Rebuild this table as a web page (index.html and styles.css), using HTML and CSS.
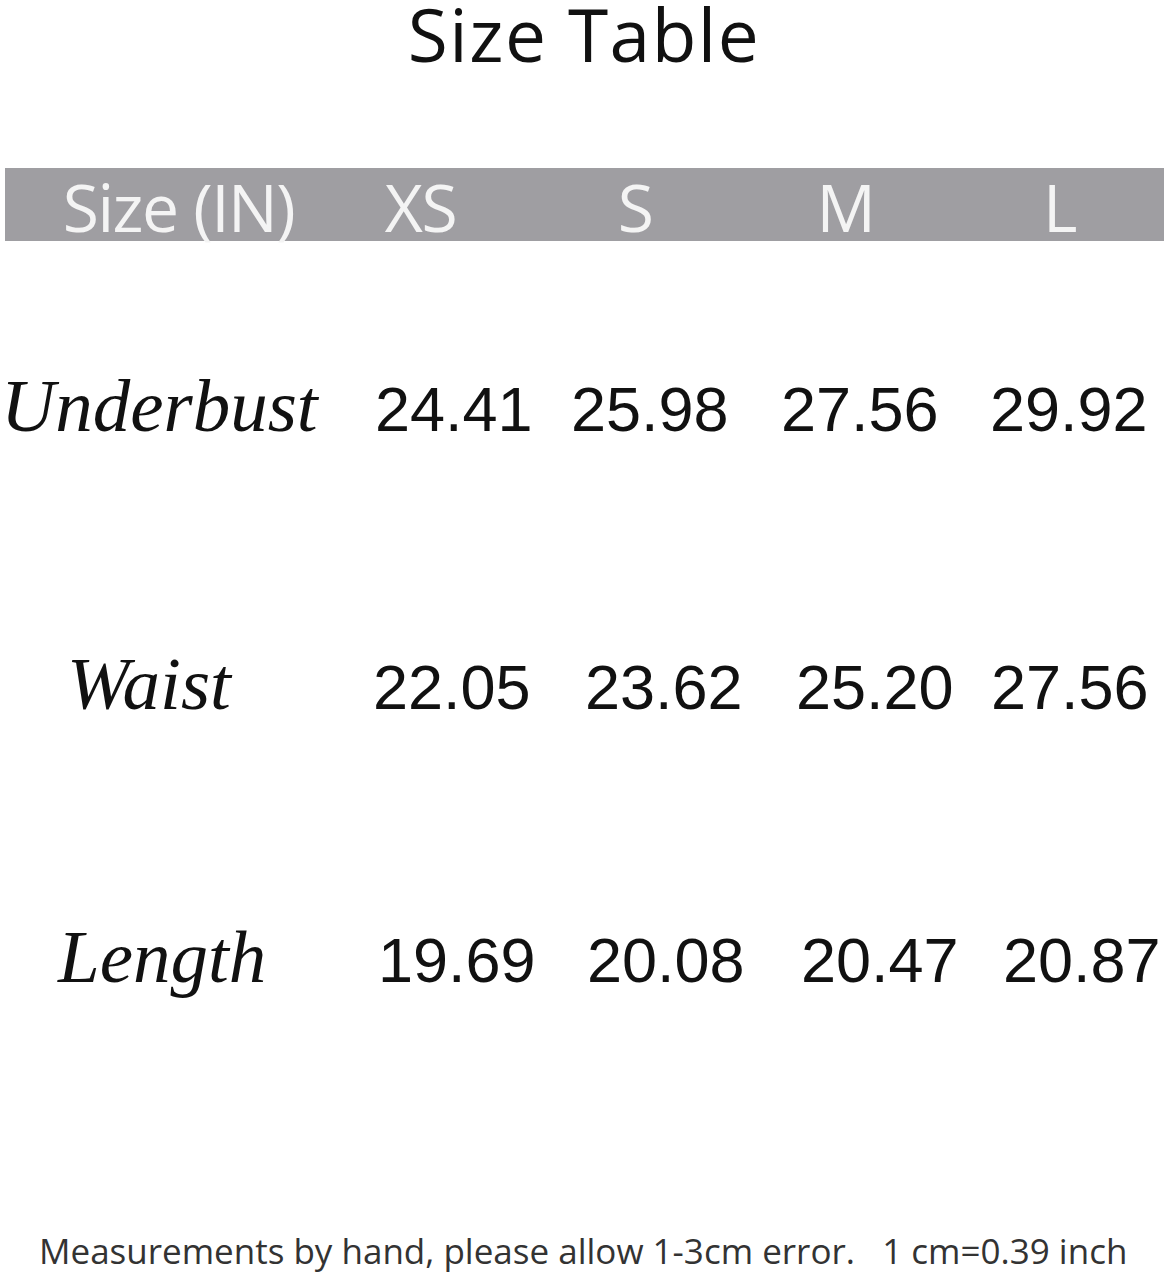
FILE: index.html
```html
<!DOCTYPE html>
<html lang="en">
<head>
<meta charset="utf-8">
<title>Size Table</title>
<link rel="stylesheet" href="styles.css">
</head>
<body>
<div class="page">
  <h1 class="title">Size Table</h1>
  <div class="head-bar">
    <div class="head-cell">Size (IN)</div>
    <div class="head-cell">XS</div>
    <div class="head-cell">S</div>
    <div class="head-cell">M</div>
    <div class="head-cell head-last">L</div>
  </div>
  <div class="row row-underbust">
    <div class="label">Underbust</div>
    <div class="val">24.41</div>
    <div class="val">25.98</div>
    <div class="val">27.56</div>
    <div class="val">29.92</div>
  </div>
  <div class="row row-waist">
    <div class="label">Waist</div>
    <div class="val">22.05</div>
    <div class="val">23.62</div>
    <div class="val">25.20</div>
    <div class="val">27.56</div>
  </div>
  <div class="row row-length">
    <div class="label">Length</div>
    <div class="val">19.69</div>
    <div class="val">20.08</div>
    <div class="val">20.47</div>
    <div class="val">20.87</div>
  </div>
  <p class="note">Measurements by hand, please allow 1-3cm error.&nbsp;&nbsp;&nbsp;1 cm=0.39 inch</p>
</div>
</body>
</html>
```
FILE: styles.css
```css
html, body {
  margin: 0;
  padding: 0;
  background: #ffffff;
}

.page {
  width: 1166px;
  min-height: 1275px;
}

.title {
  margin: 0;
  font-family: "Open Sans", "Noto Sans", sans-serif;
  font-weight: 400;
  font-size: 73px;
  line-height: 67px;
  height: 67px;
  letter-spacing: 1.5px;
  text-align: center;
  color: #111111;
  padding-left: 2px;
}

.head-bar {
  margin: 101px 2px 0 5px;
  height: 73px;
  box-sizing: border-box;
  padding-top: 4px;
  background: #9f9ea2;
  display: grid;
  grid-template-columns: 347px 137px 292px 129px 1fr;
}

.head-cell {
  font-family: "Open Sans", "Noto Sans", sans-serif;
  font-size: 66px;
  line-height: 69px;
  color: #f4f4f4;
  text-align: center;
  white-space: nowrap;
  letter-spacing: -1.5px;
}

.head-last {
  padding-left: 45px;
}

.row {
  display: grid;
  align-items: baseline;
  height: 74px;
}

.row-underbust {
  margin-top: 130px;
  grid-template-columns: 375px 196px 210px 209px 1fr;
}

.row-waist {
  margin-top: 204px;
  grid-template-columns: 373px 212px 211px 195px 1fr;
}

.row-length {
  margin-top: 199px;
  grid-template-columns: 378px 209px 214px 202px 1fr;
}

.label {
  font-family: "Liberation Serif", "DejaVu Serif", serif;
  font-style: italic;
  font-size: 75px;
  line-height: 70px;
  color: #111111;
  white-space: nowrap;
}

.row-underbust .label { padding-left: 1px; }
.row-waist .label { padding-left: 67px; }
.row-length .label { padding-left: 58px; }

.val {
  font-family: "Liberation Sans", Arial, sans-serif;
  font-size: 63px;
  line-height: 70px;
  color: #111111;
  white-space: nowrap;
}

.note {
  margin: 235px 0 0 39px;
  font-family: "Open Sans", "Noto Sans", sans-serif;
  font-size: 35px;
  line-height: 40px;
  color: #333333;
  white-space: nowrap;
}
```
